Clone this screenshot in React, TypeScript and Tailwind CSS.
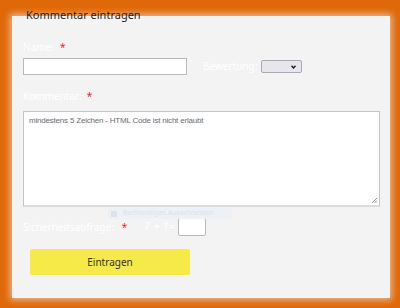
import React from 'react';

function Star({ gap = 'ml-[5px]' }: { gap?: string }) {
  return <span className={`${gap} text-[10px] text-[#ff1a1a]`}>*</span>;
}

export default function App() {
  return (
    <div className="h-[308px] w-[400px] overflow-hidden bg-[#df6808] pl-[12px] pt-[16px] font-['Noto_Sans',sans-serif]">
      <div className="relative h-[282px] w-[378px] bg-[#f3f3f3] px-[11px] pt-[24px] shadow-[0_0_7px_2px_rgba(255,255,255,0.55)]">
        <div className="absolute left-[12px] top-[-9px] px-[2px] text-[11px] leading-[16px] text-[#1e1e1e]">
          Kommentar eintragen
        </div>

        {/* name + rating */}
        <div className="flex items-end">
          <div className="flex flex-col">
            <div className="flex h-[14px] items-center text-[10px] text-white">
              Name:
              <Star gap="ml-[6px]" />
            </div>
            <input className="mt-[4px] h-[17px] w-[164px] border border-[#b9b9c2] bg-white" />
          </div>
          <div className="mb-[1px] ml-[16px] flex items-center">
            <span className="text-[10px] text-white">Bewertung:</span>
            <div className="ml-[4px] flex h-[13px] w-[41px] items-center justify-end rounded-[2px] border border-[#a9a9b3] bg-[#e6e6ec] pr-[5px]">
              <svg width="5" height="4" viewBox="0 0 5 4">
                <path d="M0.5 0.8 L2.5 3 L4.5 0.8" stroke="#222" strokeWidth="1.5" fill="none" />
              </svg>
            </div>
          </div>
        </div>

        {/* comment */}
        <div className="mt-[14px] flex h-[14px] items-center text-[10px] text-white">
          Kommentar:
          <Star />
        </div>
        <div className="relative mt-[8px] h-[96px] w-[357px] border border-[#c3c3cb] border-b-2 border-b-[#dcdce0] bg-white pl-[5px] pt-[3px]">
          <div className="font-['Liberation_Sans',sans-serif] text-[8px] leading-[12px] tracking-[-0.2px] text-[#6d6d74]">
            mindestens 5 Zeichen - HTML Code ist nicht erlaubt
          </div>
          <svg className="absolute bottom-[1px] right-[1px]" width="7" height="7" viewBox="0 0 7 7">
            <path d="M6 1 L1 6 M6 3.5 L3.5 6 M6 5.5 L5.5 6" stroke="#999" strokeWidth="1" />
          </svg>
        </div>

        {/* faint capture tooltip */}
        <div className="absolute left-[96px] top-[192px] flex h-[11px] w-[124px] items-center bg-[#edf0f5] px-[3px] text-[7px] text-[#dde2eb]">
          <span className="mr-[6px] inline-block h-[6px] w-[6px] bg-[#dde2ec]" />
          Rechteckiges Ausschneiden
        </div>

        {/* captcha */}
        <div className="mt-[11px] flex items-center">
          <span className="text-[10px] text-white">Sicherheitsabfrage:</span>
          <Star gap="ml-[8px]" />
          <span className="ml-[17px] text-[10.5px] italic tracking-[0.3px] text-white">7 + 1=</span>
          <input className="ml-[3px] h-[18px] w-[28px] rounded-[2px] border border-[#b9b9c2] bg-white" />
        </div>

        {/* submit */}
        <button className="ml-[7px] mt-[13px] flex h-[26px] w-[160px] items-center justify-center rounded-[2px] bg-[#f5ea48] text-[10px] text-[#333]">
          Eintragen
        </button>
      </div>
    </div>
  );
}
